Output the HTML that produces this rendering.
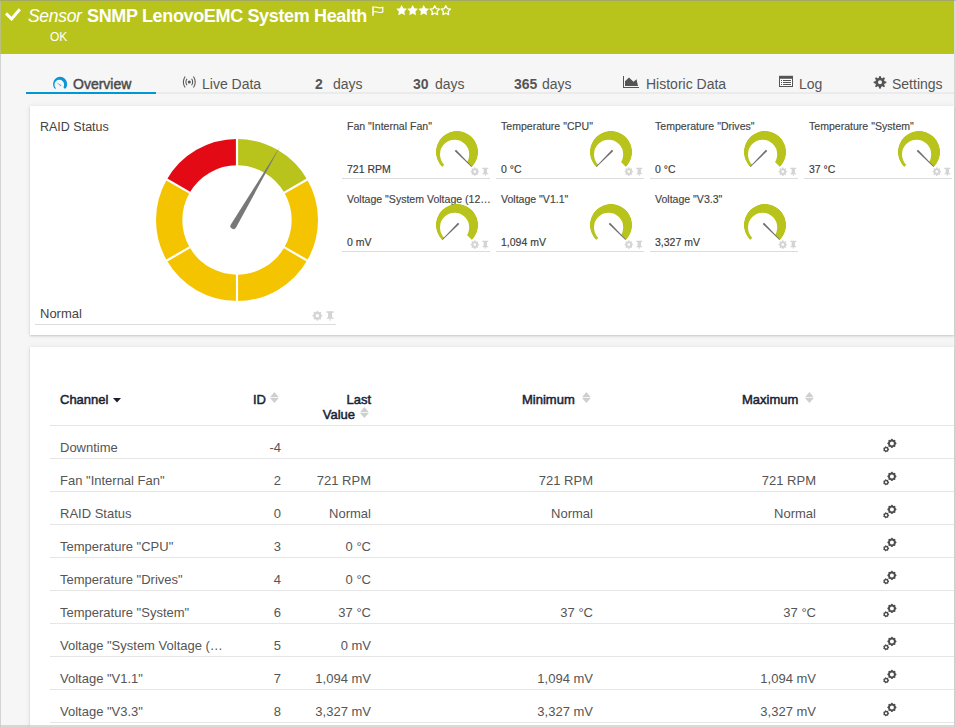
<!DOCTYPE html>
<html><head><meta charset="utf-8">
<style>
*{margin:0;padding:0;box-sizing:border-box}
html,body{width:956px;height:727px;overflow:hidden}
body{background:#f6f6f6;position:relative;font-family:"Liberation Sans",sans-serif;color:#444}
.abs{position:absolute}
#hdr{position:absolute;left:0;top:0;width:954px;height:54px;background:#b8c41c}
.tab{position:absolute;top:75px;font-size:14px;color:#555;white-space:nowrap;line-height:18px}
.panel{position:absolute;left:30px;width:924px;background:#fff;box-shadow:0 1px 2px rgba(0,0,0,0.16),0 0 6px rgba(0,0,0,0.07)}
.tt{position:absolute;font-size:10.55px;color:#444;-webkit-text-stroke:0.15px #444;white-space:nowrap;line-height:14px}
.tv{position:absolute;font-size:10.5px;color:#3a3a3a;-webkit-text-stroke:0.15px #3a3a3a;white-space:nowrap;line-height:14px}
.tl{position:absolute;width:148px;height:1px;background:#dcdcdc}
.rl{position:absolute;left:50px;width:904px;height:1px;background:#e6e6e6}
.td{position:absolute;font-size:13px;color:#555;white-space:nowrap;line-height:16px}
.th{position:absolute;font-size:13px;font-weight:normal;color:#1b1f33;-webkit-text-stroke:0.5px #1b1f33;white-space:nowrap;line-height:15px}
</style></head><body>
<div id="hdr"></div>
<div class="abs" style="left:0;top:0;width:956px;height:1px;background:rgba(150,150,150,0.6)"></div>
<svg class="abs" style="left:5px;top:8px" width="16" height="13"><path d="M1,5.4 L6.6,11 L14.8,1.2" stroke="#fff" stroke-width="3" fill="none"/></svg>
<div class="abs" style="left:28px;top:5px;font-size:17.5px;font-style:italic;color:#fff;line-height:22px;white-space:nowrap;letter-spacing:-0.3px">Sensor</div>
<div class="abs" style="left:87px;top:5px;font-size:18px;font-weight:bold;color:#fff;line-height:22px;white-space:nowrap;letter-spacing:-0.35px">SNMP LenovoEMC System Health</div>
<svg class="abs" style="left:372px;top:6px" width="12" height="10"><path d="M1,0.5 V9.8" stroke="#fff" stroke-width="1.5" fill="none"/><path d="M1.5,1.3 C4,0 6,3 10.8,1.3 V6 C6,7.7 4,4.7 1.5,6" stroke="#fff" stroke-width="1.2" fill="none"/></svg>
<svg class="abs" style="left:396px;top:4px" width="60" height="14"><path d="M5.60,1.00 L7.31,4.24 L10.93,4.87 L8.37,7.50 L8.89,11.13 L5.60,9.51 L2.31,11.13 L2.83,7.50 L0.27,4.87 L3.89,4.24 Z" fill="#fff"/><path d="M16.65,1.00 L18.36,4.24 L21.98,4.87 L19.42,7.50 L19.94,11.13 L16.65,9.51 L13.36,11.13 L13.88,7.50 L11.32,4.87 L14.94,4.24 Z" fill="#fff"/><path d="M27.70,1.00 L29.41,4.24 L33.03,4.87 L30.47,7.50 L30.99,11.13 L27.70,9.51 L24.41,11.13 L24.93,7.50 L22.37,4.87 L25.99,4.24 Z" fill="#fff"/><path d="M38.75,1.70 L40.25,4.54 L43.41,5.09 L41.17,7.39 L41.63,10.56 L38.75,9.15 L35.87,10.56 L36.33,7.39 L34.09,5.09 L37.25,4.54 Z" fill="none" stroke="#fff" stroke-width="1.3" stroke-linejoin="round"/><path d="M49.80,1.70 L51.30,4.54 L54.46,5.09 L52.22,7.39 L52.68,10.56 L49.80,9.15 L46.92,10.56 L47.38,7.39 L45.14,5.09 L48.30,4.54 Z" fill="none" stroke="#fff" stroke-width="1.3" stroke-linejoin="round"/></svg>
<div class="abs" style="left:50px;top:30px;font-size:12px;color:#fff;line-height:14px">OK</div>

<div class="abs" style="left:26px;top:92px;width:928px;height:2px;background:#ebebeb"></div>
<div class="abs" style="left:26px;top:92px;width:130px;height:2px;background:#0097d7"></div>
<svg class="abs" style="left:52px;top:76px" width="20" height="14"><defs><clipPath id="ovc"><path d="M8.10,7.90 L2.37,13.63 A8.1,8.1 0 1 1 13.83,13.63 Z"/></clipPath></defs><path clip-path="url(#ovc)" fill-rule="evenodd" fill="#0a97d6" d="M1.00,7.90 a7.1,7.1 0 1 0 14.20,0 a7.1,7.1 0 1 0 -14.20,0 Z M2.45,8.70 a4.85,4.85 0 1 0 9.70,0 a4.85,4.85 0 1 0 -9.70,0 Z"/><path d="M3.9,6.0 L9.4,9.6 L8.9,10.2 Z" fill="#0a97d6"/></svg>
<div class="tab" style="left:73px;color:#4a4a4a;-webkit-text-stroke:0.45px #4a4a4a">Overview</div>
<svg class="abs" style="left:181px;top:75px" width="17" height="14"><circle cx="8.3" cy="7" r="1.5" fill="#555"/><path d="M6.0,3.7 A6,6 0 0 0 6.0,10.3 M10.6,3.7 A6,6 0 0 1 10.6,10.3 M4.15,1.5 A10,10 0 0 0 4.15,12.5 M12.45,1.5 A10,10 0 0 1 12.45,12.5" stroke="#555" stroke-width="1.05" fill="none"/></svg>
<div class="tab" style="left:202px">Live Data</div>
<div class="tab" style="left:315px"><b>2</b></div><div class="tab" style="left:333px">days</div>
<div class="tab" style="left:413px"><b>30</b></div><div class="tab" style="left:435px">days</div>
<div class="tab" style="left:514px"><b>365</b></div><div class="tab" style="left:542px">days</div>
<svg class="abs" style="left:622px;top:75px" width="18" height="14"><rect x="1" y="1" width="1" height="12" fill="#555"/><rect x="1" y="12" width="16" height="1" fill="#555"/><path d="M3,11 V6.3 L7,2.6 L11.5,6.8 L14.5,4.2 L16,11 Z" fill="#555"/></svg>
<div class="tab" style="left:646px">Historic Data</div>
<svg class="abs" style="left:779px;top:75px" width="14" height="12"><rect x="0" y="0.8" width="14" height="11.2" fill="#555"/><rect x="1" y="3.8" width="12" height="7.2" fill="#fff"/><path d="M2,5 h1 v1 h-1 Z M2,7 h1 v1 h-1 Z M2,9 h1 v1 h-1 Z M4,5 h8 v1 h-8 Z M4,7 h8 v1 h-8 Z M4,9 h8 v1 h-8 Z" fill="#555"/></svg>
<div class="tab" style="left:799px">Log</div>
<svg class="abs" style="left:0;top:0" width="956" height="100"><path fill-rule="evenodd" fill="#555" d="M886.37,81.67 L886.37,82.93 L884.40,83.64 L884.06,84.47 L884.95,86.36 L884.06,87.25 L882.17,86.36 L881.34,86.70 L880.63,88.67 L879.37,88.67 L878.66,86.70 L877.83,86.36 L875.94,87.25 L875.05,86.36 L875.94,84.47 L875.60,83.64 L873.63,82.93 L873.63,81.67 L875.60,80.96 L875.94,80.13 L875.05,78.24 L875.94,77.35 L877.83,78.24 L878.66,77.90 L879.37,75.93 L880.63,75.93 L881.34,77.90 L882.17,78.24 L884.06,77.35 L884.95,78.24 L884.06,80.13 L884.40,80.96 Z M878.00,82.30 a2.0,2.0 0 1 0 4.00,0 a2.0,2.0 0 1 0 -4.00,0 Z"/></svg>
<div class="tab" style="left:892px">Settings</div>

<div class="panel" style="top:106px;height:229px"></div>
<div class="panel" style="top:347px;height:400px"></div>

<div class="abs" style="left:40px;top:119px;font-size:12.5px;color:#444;line-height:16px">RAID Status</div>
<div class="abs" style="left:40px;top:306px;font-size:13px;color:#444;line-height:16px">Normal</div>
<div class="abs" style="left:35px;top:324px;width:301px;height:1px;background:#dcdcdc"></div>
<svg width="956" height="727" style="position:absolute;left:0;top:0"><path d="M237.00,139.00 A81,81 0 0 1 307.15,179.50 L284.37,192.65 A54.7,54.7 0 0 0 237.00,165.30 Z" fill="#b8c41c"/><path d="M307.15,179.50 A81,81 0 0 1 307.15,260.50 L284.37,247.35 A54.7,54.7 0 0 0 284.37,192.65 Z" fill="#f5c400"/><path d="M307.15,260.50 A81,81 0 0 1 237.00,301.00 L237.00,274.70 A54.7,54.7 0 0 0 284.37,247.35 Z" fill="#f5c400"/><path d="M237.00,301.00 A81,81 0 0 1 166.85,260.50 L189.63,247.35 A54.7,54.7 0 0 0 237.00,274.70 Z" fill="#f5c400"/><path d="M166.85,260.50 A81,81 0 0 1 166.85,179.50 L189.63,192.65 A54.7,54.7 0 0 0 189.63,247.35 Z" fill="#f5c400"/><path d="M166.85,179.50 A81,81 0 0 1 237.00,139.00 L237.00,165.30 A54.7,54.7 0 0 0 189.63,192.65 Z" fill="#e30a16"/><line x1="237.00" y1="167.30" x2="237.00" y2="137.00" stroke="#fff" stroke-width="2.2"/><line x1="282.64" y1="193.65" x2="308.88" y2="178.50" stroke="#fff" stroke-width="2.2"/><line x1="282.64" y1="246.35" x2="308.88" y2="261.50" stroke="#fff" stroke-width="2.2"/><line x1="237.00" y1="272.70" x2="237.00" y2="303.00" stroke="#fff" stroke-width="2.2"/><line x1="191.36" y1="246.35" x2="165.12" y2="261.50" stroke="#fff" stroke-width="2.2"/><line x1="191.36" y1="193.65" x2="165.12" y2="178.50" stroke="#fff" stroke-width="2.2"/><path d="M236.05,227.56 L280.27,146.26 L230.87,224.52 A3.0,3.0 0 0 0 236.05,227.56 Z" fill="#787878"/></svg>
<div class="tt" style="left:347px;top:119px">Fan "Internal Fan"</div>
<div class="tv" style="left:347px;top:162px">721 RPM</div>
<div class="tl" style="left:342px;top:178px"></div><div class="tt" style="left:501px;top:119px">Temperature "CPU"</div>
<div class="tv" style="left:501px;top:162px">0 °C</div>
<div class="tl" style="left:496px;top:178px"></div><div class="tt" style="left:655px;top:119px">Temperature "Drives"</div>
<div class="tv" style="left:655px;top:162px">0 °C</div>
<div class="tl" style="left:650px;top:178px"></div><div class="tt" style="left:809px;top:119px">Temperature "System"</div>
<div class="tv" style="left:809px;top:162px">37 °C</div>
<div class="tl" style="left:804px;top:178px"></div><div class="tt" style="left:347px;top:192px">Voltage "System Voltage (12…</div>
<div class="tv" style="left:347px;top:235px">0 mV</div>
<div class="tl" style="left:342px;top:251px"></div><div class="tt" style="left:501px;top:192px">Voltage "V1.1"</div>
<div class="tv" style="left:501px;top:235px">1,094 mV</div>
<div class="tl" style="left:496px;top:251px"></div><div class="tt" style="left:655px;top:192px">Voltage "V3.3"</div>
<div class="tv" style="left:655px;top:235px">3,327 mV</div>
<div class="tl" style="left:650px;top:251px"></div>
<svg width="956" height="727" style="position:absolute;left:0;top:0"><clipPath id="c0"><path d="M457.00,152.00 L442.01,166.99 A21.2,21.2 0 1 1 471.99,166.99 Z"/></clipPath><path clip-path="url(#c0)" fill-rule="evenodd" fill="#b8c41c" d="M435.80,152.00 a21.2,21.2 0 1 0 42.40,0 a21.2,21.2 0 1 0 -42.40,0 Z M440.00,154.40 a14.6,14.6 0 1 0 29.20,0 a14.6,14.6 0 1 0 -29.20,0 Z"/><path d="M454.67,151.08 L471.46,166.96 L471.96,166.46 L456.08,149.67 Z" fill="#6e6e6e"/><clipPath id="c1"><path d="M611.00,152.00 L596.01,166.99 A21.2,21.2 0 1 1 625.99,166.99 Z"/></clipPath><path clip-path="url(#c1)" fill-rule="evenodd" fill="#b8c41c" d="M589.80,152.00 a21.2,21.2 0 1 0 42.40,0 a21.2,21.2 0 1 0 -42.40,0 Z M594.00,154.40 a14.6,14.6 0 1 0 29.20,0 a14.6,14.6 0 1 0 -29.20,0 Z"/><path d="M611.92,149.67 L596.04,166.46 L596.54,166.96 L613.33,151.08 Z" fill="#6e6e6e"/><clipPath id="c2"><path d="M765.00,152.00 L750.01,166.99 A21.2,21.2 0 1 1 779.99,166.99 Z"/></clipPath><path clip-path="url(#c2)" fill-rule="evenodd" fill="#b8c41c" d="M743.80,152.00 a21.2,21.2 0 1 0 42.40,0 a21.2,21.2 0 1 0 -42.40,0 Z M748.00,154.40 a14.6,14.6 0 1 0 29.20,0 a14.6,14.6 0 1 0 -29.20,0 Z"/><path d="M765.92,149.67 L750.04,166.46 L750.54,166.96 L767.33,151.08 Z" fill="#6e6e6e"/><clipPath id="c3"><path d="M919.00,152.00 L904.01,166.99 A21.2,21.2 0 1 1 933.99,166.99 Z"/></clipPath><path clip-path="url(#c3)" fill-rule="evenodd" fill="#b8c41c" d="M897.80,152.00 a21.2,21.2 0 1 0 42.40,0 a21.2,21.2 0 1 0 -42.40,0 Z M902.00,154.40 a14.6,14.6 0 1 0 29.20,0 a14.6,14.6 0 1 0 -29.20,0 Z"/><path d="M916.67,151.08 L933.46,166.96 L933.96,166.46 L918.08,149.67 Z" fill="#6e6e6e"/><clipPath id="c4"><path d="M457.00,225.00 L442.01,239.99 A21.2,21.2 0 1 1 471.99,239.99 Z"/></clipPath><path clip-path="url(#c4)" fill-rule="evenodd" fill="#b8c41c" d="M435.80,225.00 a21.2,21.2 0 1 0 42.40,0 a21.2,21.2 0 1 0 -42.40,0 Z M440.00,227.40 a14.6,14.6 0 1 0 29.20,0 a14.6,14.6 0 1 0 -29.20,0 Z"/><path d="M457.92,222.67 L442.04,239.46 L442.54,239.96 L459.33,224.08 Z" fill="#6e6e6e"/><clipPath id="c5"><path d="M611.00,225.00 L596.01,239.99 A21.2,21.2 0 1 1 625.99,239.99 Z"/></clipPath><path clip-path="url(#c5)" fill-rule="evenodd" fill="#b8c41c" d="M589.80,225.00 a21.2,21.2 0 1 0 42.40,0 a21.2,21.2 0 1 0 -42.40,0 Z M594.00,227.40 a14.6,14.6 0 1 0 29.20,0 a14.6,14.6 0 1 0 -29.20,0 Z"/><path d="M608.67,224.08 L625.46,239.96 L625.96,239.46 L610.08,222.67 Z" fill="#6e6e6e"/><clipPath id="c6"><path d="M765.00,225.00 L750.01,239.99 A21.2,21.2 0 1 1 779.99,239.99 Z"/></clipPath><path clip-path="url(#c6)" fill-rule="evenodd" fill="#b8c41c" d="M743.80,225.00 a21.2,21.2 0 1 0 42.40,0 a21.2,21.2 0 1 0 -42.40,0 Z M748.00,227.40 a14.6,14.6 0 1 0 29.20,0 a14.6,14.6 0 1 0 -29.20,0 Z"/><path d="M762.67,224.08 L779.46,239.96 L779.96,239.46 L764.08,222.67 Z" fill="#6e6e6e"/><path fill-rule="evenodd" fill="#d4d4d4" d="M479.08,171.18 L479.08,172.02 L477.96,172.56 L477.71,173.16 L478.12,174.33 L477.53,174.92 L476.36,174.51 L475.76,174.76 L475.22,175.88 L474.38,175.88 L473.84,174.76 L473.24,174.51 L472.07,174.92 L471.48,174.33 L471.89,173.16 L471.64,172.56 L470.52,172.02 L470.52,171.18 L471.64,170.64 L471.89,170.04 L471.48,168.87 L472.07,168.28 L473.24,168.69 L473.84,168.44 L474.38,167.32 L475.22,167.32 L475.76,168.44 L476.36,168.69 L477.53,168.28 L478.12,168.87 L477.71,170.04 L477.96,170.64 Z M473.40,171.60 a1.4,1.4 0 1 0 2.80,0 a1.4,1.4 0 1 0 -2.80,0 Z"/><path fill="#d4d4d4" d="M482.30,167.80 h6.00 v1.28 h-1.35 v3.60 l1.35,0.96 v0.58 h-2.50 v1.58 h-1 v-1.58 h-2.50 v-0.58 l1.35,-0.96 v-3.60 h-1.35 Z"/><path fill-rule="evenodd" fill="#d4d4d4" d="M633.08,171.18 L633.08,172.02 L631.96,172.56 L631.71,173.16 L632.12,174.33 L631.53,174.92 L630.36,174.51 L629.76,174.76 L629.22,175.88 L628.38,175.88 L627.84,174.76 L627.24,174.51 L626.07,174.92 L625.48,174.33 L625.89,173.16 L625.64,172.56 L624.52,172.02 L624.52,171.18 L625.64,170.64 L625.89,170.04 L625.48,168.87 L626.07,168.28 L627.24,168.69 L627.84,168.44 L628.38,167.32 L629.22,167.32 L629.76,168.44 L630.36,168.69 L631.53,168.28 L632.12,168.87 L631.71,170.04 L631.96,170.64 Z M627.40,171.60 a1.4,1.4 0 1 0 2.80,0 a1.4,1.4 0 1 0 -2.80,0 Z"/><path fill="#d4d4d4" d="M636.30,167.80 h6.00 v1.28 h-1.35 v3.60 l1.35,0.96 v0.58 h-2.50 v1.58 h-1 v-1.58 h-2.50 v-0.58 l1.35,-0.96 v-3.60 h-1.35 Z"/><path fill-rule="evenodd" fill="#d4d4d4" d="M787.08,171.18 L787.08,172.02 L785.96,172.56 L785.71,173.16 L786.12,174.33 L785.53,174.92 L784.36,174.51 L783.76,174.76 L783.22,175.88 L782.38,175.88 L781.84,174.76 L781.24,174.51 L780.07,174.92 L779.48,174.33 L779.89,173.16 L779.64,172.56 L778.52,172.02 L778.52,171.18 L779.64,170.64 L779.89,170.04 L779.48,168.87 L780.07,168.28 L781.24,168.69 L781.84,168.44 L782.38,167.32 L783.22,167.32 L783.76,168.44 L784.36,168.69 L785.53,168.28 L786.12,168.87 L785.71,170.04 L785.96,170.64 Z M781.40,171.60 a1.4,1.4 0 1 0 2.80,0 a1.4,1.4 0 1 0 -2.80,0 Z"/><path fill="#d4d4d4" d="M790.30,167.80 h6.00 v1.28 h-1.35 v3.60 l1.35,0.96 v0.58 h-2.50 v1.58 h-1 v-1.58 h-2.50 v-0.58 l1.35,-0.96 v-3.60 h-1.35 Z"/><path fill-rule="evenodd" fill="#d4d4d4" d="M941.08,171.18 L941.08,172.02 L939.96,172.56 L939.71,173.16 L940.12,174.33 L939.53,174.92 L938.36,174.51 L937.76,174.76 L937.22,175.88 L936.38,175.88 L935.84,174.76 L935.24,174.51 L934.07,174.92 L933.48,174.33 L933.89,173.16 L933.64,172.56 L932.52,172.02 L932.52,171.18 L933.64,170.64 L933.89,170.04 L933.48,168.87 L934.07,168.28 L935.24,168.69 L935.84,168.44 L936.38,167.32 L937.22,167.32 L937.76,168.44 L938.36,168.69 L939.53,168.28 L940.12,168.87 L939.71,170.04 L939.96,170.64 Z M935.40,171.60 a1.4,1.4 0 1 0 2.80,0 a1.4,1.4 0 1 0 -2.80,0 Z"/><path fill="#d4d4d4" d="M944.30,167.80 h6.00 v1.28 h-1.35 v3.60 l1.35,0.96 v0.58 h-2.50 v1.58 h-1 v-1.58 h-2.50 v-0.58 l1.35,-0.96 v-3.60 h-1.35 Z"/><path fill-rule="evenodd" fill="#d4d4d4" d="M479.08,244.18 L479.08,245.02 L477.96,245.56 L477.71,246.16 L478.12,247.33 L477.53,247.92 L476.36,247.51 L475.76,247.76 L475.22,248.88 L474.38,248.88 L473.84,247.76 L473.24,247.51 L472.07,247.92 L471.48,247.33 L471.89,246.16 L471.64,245.56 L470.52,245.02 L470.52,244.18 L471.64,243.64 L471.89,243.04 L471.48,241.87 L472.07,241.28 L473.24,241.69 L473.84,241.44 L474.38,240.32 L475.22,240.32 L475.76,241.44 L476.36,241.69 L477.53,241.28 L478.12,241.87 L477.71,243.04 L477.96,243.64 Z M473.40,244.60 a1.4,1.4 0 1 0 2.80,0 a1.4,1.4 0 1 0 -2.80,0 Z"/><path fill="#d4d4d4" d="M482.30,240.80 h6.00 v1.28 h-1.35 v3.60 l1.35,0.96 v0.58 h-2.50 v1.58 h-1 v-1.58 h-2.50 v-0.58 l1.35,-0.96 v-3.60 h-1.35 Z"/><path fill-rule="evenodd" fill="#d4d4d4" d="M633.08,244.18 L633.08,245.02 L631.96,245.56 L631.71,246.16 L632.12,247.33 L631.53,247.92 L630.36,247.51 L629.76,247.76 L629.22,248.88 L628.38,248.88 L627.84,247.76 L627.24,247.51 L626.07,247.92 L625.48,247.33 L625.89,246.16 L625.64,245.56 L624.52,245.02 L624.52,244.18 L625.64,243.64 L625.89,243.04 L625.48,241.87 L626.07,241.28 L627.24,241.69 L627.84,241.44 L628.38,240.32 L629.22,240.32 L629.76,241.44 L630.36,241.69 L631.53,241.28 L632.12,241.87 L631.71,243.04 L631.96,243.64 Z M627.40,244.60 a1.4,1.4 0 1 0 2.80,0 a1.4,1.4 0 1 0 -2.80,0 Z"/><path fill="#d4d4d4" d="M636.30,240.80 h6.00 v1.28 h-1.35 v3.60 l1.35,0.96 v0.58 h-2.50 v1.58 h-1 v-1.58 h-2.50 v-0.58 l1.35,-0.96 v-3.60 h-1.35 Z"/><path fill-rule="evenodd" fill="#d4d4d4" d="M787.08,244.18 L787.08,245.02 L785.96,245.56 L785.71,246.16 L786.12,247.33 L785.53,247.92 L784.36,247.51 L783.76,247.76 L783.22,248.88 L782.38,248.88 L781.84,247.76 L781.24,247.51 L780.07,247.92 L779.48,247.33 L779.89,246.16 L779.64,245.56 L778.52,245.02 L778.52,244.18 L779.64,243.64 L779.89,243.04 L779.48,241.87 L780.07,241.28 L781.24,241.69 L781.84,241.44 L782.38,240.32 L783.22,240.32 L783.76,241.44 L784.36,241.69 L785.53,241.28 L786.12,241.87 L785.71,243.04 L785.96,243.64 Z M781.40,244.60 a1.4,1.4 0 1 0 2.80,0 a1.4,1.4 0 1 0 -2.80,0 Z"/><path fill="#d4d4d4" d="M790.30,240.80 h6.00 v1.28 h-1.35 v3.60 l1.35,0.96 v0.58 h-2.50 v1.58 h-1 v-1.58 h-2.50 v-0.58 l1.35,-0.96 v-3.60 h-1.35 Z"/><path fill-rule="evenodd" fill="#d4d4d4" d="M322.38,315.21 L322.38,316.19 L321.13,316.83 L320.84,317.54 L321.27,318.87 L320.57,319.57 L319.24,319.14 L318.53,319.43 L317.89,320.68 L316.91,320.68 L316.27,319.43 L315.56,319.14 L314.23,319.57 L313.53,318.87 L313.96,317.54 L313.67,316.83 L312.42,316.19 L312.42,315.21 L313.67,314.57 L313.96,313.86 L313.53,312.53 L314.23,311.83 L315.56,312.26 L316.27,311.97 L316.91,310.72 L317.89,310.72 L318.53,311.97 L319.24,312.26 L320.57,311.83 L321.27,312.53 L320.84,313.86 L321.13,314.57 Z M315.70,315.70 a1.7,1.7 0 1 0 3.40,0 a1.7,1.7 0 1 0 -3.40,0 Z"/><path fill="#d4d4d4" d="M326.50,311.20 h7.20 v1.52 h-1.62 v4.28 l1.62,1.14 v0.68 h-3.10 v1.88 h-1 v-1.88 h-3.10 v-0.68 l1.62,-1.14 v-4.28 h-1.62 Z"/><path fill-rule="evenodd" fill="#4d4d4d" d="M896.48,442.95 L896.48,443.85 L895.63,444.53 L895.34,445.24 L895.46,446.32 L894.82,446.96 L893.74,446.84 L893.03,447.13 L892.35,447.98 L891.45,447.98 L890.77,447.13 L890.06,446.84 L888.98,446.96 L888.34,446.32 L888.46,445.24 L888.17,444.53 L887.32,443.85 L887.32,442.95 L888.17,442.27 L888.46,441.56 L888.34,440.48 L888.98,439.84 L890.06,439.96 L890.77,439.67 L891.45,438.82 L892.35,438.82 L893.03,439.67 L893.74,439.96 L894.82,439.84 L895.46,440.48 L895.34,441.56 L895.63,442.27 Z M889.90,443.40 a2.0,2.0 0 1 0 4.00,0 a2.0,2.0 0 1 0 -4.00,0 Z"/><path fill-rule="evenodd" fill="#4d4d4d" d="M889.08,448.96 L889.08,449.64 L888.46,450.13 L888.22,450.63 L888.22,451.42 L887.70,451.84 L886.93,451.66 L886.38,451.78 L885.76,452.28 L885.11,452.13 L884.77,451.42 L884.33,451.07 L883.56,450.90 L883.27,450.29 L883.62,449.58 L883.62,449.02 L883.27,448.31 L883.56,447.70 L884.33,447.53 L884.77,447.18 L885.11,446.47 L885.76,446.32 L886.38,446.82 L886.93,446.94 L887.70,446.76 L888.22,447.18 L888.22,447.97 L888.46,448.47 Z M884.95,449.30 a1.15,1.15 0 1 0 2.30,0 a1.15,1.15 0 1 0 -2.30,0 Z"/><path fill-rule="evenodd" fill="#4d4d4d" d="M896.48,475.95 L896.48,476.85 L895.63,477.53 L895.34,478.24 L895.46,479.32 L894.82,479.96 L893.74,479.84 L893.03,480.13 L892.35,480.98 L891.45,480.98 L890.77,480.13 L890.06,479.84 L888.98,479.96 L888.34,479.32 L888.46,478.24 L888.17,477.53 L887.32,476.85 L887.32,475.95 L888.17,475.27 L888.46,474.56 L888.34,473.48 L888.98,472.84 L890.06,472.96 L890.77,472.67 L891.45,471.82 L892.35,471.82 L893.03,472.67 L893.74,472.96 L894.82,472.84 L895.46,473.48 L895.34,474.56 L895.63,475.27 Z M889.90,476.40 a2.0,2.0 0 1 0 4.00,0 a2.0,2.0 0 1 0 -4.00,0 Z"/><path fill-rule="evenodd" fill="#4d4d4d" d="M889.08,481.96 L889.08,482.64 L888.46,483.13 L888.22,483.63 L888.22,484.42 L887.70,484.84 L886.93,484.66 L886.38,484.78 L885.76,485.28 L885.11,485.13 L884.77,484.42 L884.33,484.07 L883.56,483.90 L883.27,483.29 L883.62,482.58 L883.62,482.02 L883.27,481.31 L883.56,480.70 L884.33,480.53 L884.77,480.18 L885.11,479.47 L885.76,479.32 L886.38,479.82 L886.93,479.94 L887.70,479.76 L888.22,480.18 L888.22,480.97 L888.46,481.47 Z M884.95,482.30 a1.15,1.15 0 1 0 2.30,0 a1.15,1.15 0 1 0 -2.30,0 Z"/><path fill-rule="evenodd" fill="#4d4d4d" d="M896.48,508.95 L896.48,509.85 L895.63,510.53 L895.34,511.24 L895.46,512.32 L894.82,512.96 L893.74,512.84 L893.03,513.13 L892.35,513.98 L891.45,513.98 L890.77,513.13 L890.06,512.84 L888.98,512.96 L888.34,512.32 L888.46,511.24 L888.17,510.53 L887.32,509.85 L887.32,508.95 L888.17,508.27 L888.46,507.56 L888.34,506.48 L888.98,505.84 L890.06,505.96 L890.77,505.67 L891.45,504.82 L892.35,504.82 L893.03,505.67 L893.74,505.96 L894.82,505.84 L895.46,506.48 L895.34,507.56 L895.63,508.27 Z M889.90,509.40 a2.0,2.0 0 1 0 4.00,0 a2.0,2.0 0 1 0 -4.00,0 Z"/><path fill-rule="evenodd" fill="#4d4d4d" d="M889.08,514.96 L889.08,515.64 L888.46,516.13 L888.22,516.63 L888.22,517.42 L887.70,517.84 L886.93,517.66 L886.38,517.78 L885.76,518.28 L885.11,518.13 L884.77,517.42 L884.33,517.07 L883.56,516.90 L883.27,516.29 L883.62,515.58 L883.62,515.02 L883.27,514.31 L883.56,513.70 L884.33,513.53 L884.77,513.18 L885.11,512.47 L885.76,512.32 L886.38,512.82 L886.93,512.94 L887.70,512.76 L888.22,513.18 L888.22,513.97 L888.46,514.47 Z M884.95,515.30 a1.15,1.15 0 1 0 2.30,0 a1.15,1.15 0 1 0 -2.30,0 Z"/><path fill-rule="evenodd" fill="#4d4d4d" d="M896.48,541.95 L896.48,542.85 L895.63,543.53 L895.34,544.24 L895.46,545.32 L894.82,545.96 L893.74,545.84 L893.03,546.13 L892.35,546.98 L891.45,546.98 L890.77,546.13 L890.06,545.84 L888.98,545.96 L888.34,545.32 L888.46,544.24 L888.17,543.53 L887.32,542.85 L887.32,541.95 L888.17,541.27 L888.46,540.56 L888.34,539.48 L888.98,538.84 L890.06,538.96 L890.77,538.67 L891.45,537.82 L892.35,537.82 L893.03,538.67 L893.74,538.96 L894.82,538.84 L895.46,539.48 L895.34,540.56 L895.63,541.27 Z M889.90,542.40 a2.0,2.0 0 1 0 4.00,0 a2.0,2.0 0 1 0 -4.00,0 Z"/><path fill-rule="evenodd" fill="#4d4d4d" d="M889.08,547.96 L889.08,548.64 L888.46,549.13 L888.22,549.63 L888.22,550.42 L887.70,550.84 L886.93,550.66 L886.38,550.78 L885.76,551.28 L885.11,551.13 L884.77,550.42 L884.33,550.07 L883.56,549.90 L883.27,549.29 L883.62,548.58 L883.62,548.02 L883.27,547.31 L883.56,546.70 L884.33,546.53 L884.77,546.18 L885.11,545.47 L885.76,545.32 L886.38,545.82 L886.93,545.94 L887.70,545.76 L888.22,546.18 L888.22,546.97 L888.46,547.47 Z M884.95,548.30 a1.15,1.15 0 1 0 2.30,0 a1.15,1.15 0 1 0 -2.30,0 Z"/><path fill-rule="evenodd" fill="#4d4d4d" d="M896.48,574.95 L896.48,575.85 L895.63,576.53 L895.34,577.24 L895.46,578.32 L894.82,578.96 L893.74,578.84 L893.03,579.13 L892.35,579.98 L891.45,579.98 L890.77,579.13 L890.06,578.84 L888.98,578.96 L888.34,578.32 L888.46,577.24 L888.17,576.53 L887.32,575.85 L887.32,574.95 L888.17,574.27 L888.46,573.56 L888.34,572.48 L888.98,571.84 L890.06,571.96 L890.77,571.67 L891.45,570.82 L892.35,570.82 L893.03,571.67 L893.74,571.96 L894.82,571.84 L895.46,572.48 L895.34,573.56 L895.63,574.27 Z M889.90,575.40 a2.0,2.0 0 1 0 4.00,0 a2.0,2.0 0 1 0 -4.00,0 Z"/><path fill-rule="evenodd" fill="#4d4d4d" d="M889.08,580.96 L889.08,581.64 L888.46,582.13 L888.22,582.63 L888.22,583.42 L887.70,583.84 L886.93,583.66 L886.38,583.78 L885.76,584.28 L885.11,584.13 L884.77,583.42 L884.33,583.07 L883.56,582.90 L883.27,582.29 L883.62,581.58 L883.62,581.02 L883.27,580.31 L883.56,579.70 L884.33,579.53 L884.77,579.18 L885.11,578.47 L885.76,578.32 L886.38,578.82 L886.93,578.94 L887.70,578.76 L888.22,579.18 L888.22,579.97 L888.46,580.47 Z M884.95,581.30 a1.15,1.15 0 1 0 2.30,0 a1.15,1.15 0 1 0 -2.30,0 Z"/><path fill-rule="evenodd" fill="#4d4d4d" d="M896.48,607.95 L896.48,608.85 L895.63,609.53 L895.34,610.24 L895.46,611.32 L894.82,611.96 L893.74,611.84 L893.03,612.13 L892.35,612.98 L891.45,612.98 L890.77,612.13 L890.06,611.84 L888.98,611.96 L888.34,611.32 L888.46,610.24 L888.17,609.53 L887.32,608.85 L887.32,607.95 L888.17,607.27 L888.46,606.56 L888.34,605.48 L888.98,604.84 L890.06,604.96 L890.77,604.67 L891.45,603.82 L892.35,603.82 L893.03,604.67 L893.74,604.96 L894.82,604.84 L895.46,605.48 L895.34,606.56 L895.63,607.27 Z M889.90,608.40 a2.0,2.0 0 1 0 4.00,0 a2.0,2.0 0 1 0 -4.00,0 Z"/><path fill-rule="evenodd" fill="#4d4d4d" d="M889.08,613.96 L889.08,614.64 L888.46,615.13 L888.22,615.63 L888.22,616.42 L887.70,616.84 L886.93,616.66 L886.38,616.78 L885.76,617.28 L885.11,617.13 L884.77,616.42 L884.33,616.07 L883.56,615.90 L883.27,615.29 L883.62,614.58 L883.62,614.02 L883.27,613.31 L883.56,612.70 L884.33,612.53 L884.77,612.18 L885.11,611.47 L885.76,611.32 L886.38,611.82 L886.93,611.94 L887.70,611.76 L888.22,612.18 L888.22,612.97 L888.46,613.47 Z M884.95,614.30 a1.15,1.15 0 1 0 2.30,0 a1.15,1.15 0 1 0 -2.30,0 Z"/><path fill-rule="evenodd" fill="#4d4d4d" d="M896.48,640.95 L896.48,641.85 L895.63,642.53 L895.34,643.24 L895.46,644.32 L894.82,644.96 L893.74,644.84 L893.03,645.13 L892.35,645.98 L891.45,645.98 L890.77,645.13 L890.06,644.84 L888.98,644.96 L888.34,644.32 L888.46,643.24 L888.17,642.53 L887.32,641.85 L887.32,640.95 L888.17,640.27 L888.46,639.56 L888.34,638.48 L888.98,637.84 L890.06,637.96 L890.77,637.67 L891.45,636.82 L892.35,636.82 L893.03,637.67 L893.74,637.96 L894.82,637.84 L895.46,638.48 L895.34,639.56 L895.63,640.27 Z M889.90,641.40 a2.0,2.0 0 1 0 4.00,0 a2.0,2.0 0 1 0 -4.00,0 Z"/><path fill-rule="evenodd" fill="#4d4d4d" d="M889.08,646.96 L889.08,647.64 L888.46,648.13 L888.22,648.63 L888.22,649.42 L887.70,649.84 L886.93,649.66 L886.38,649.78 L885.76,650.28 L885.11,650.13 L884.77,649.42 L884.33,649.07 L883.56,648.90 L883.27,648.29 L883.62,647.58 L883.62,647.02 L883.27,646.31 L883.56,645.70 L884.33,645.53 L884.77,645.18 L885.11,644.47 L885.76,644.32 L886.38,644.82 L886.93,644.94 L887.70,644.76 L888.22,645.18 L888.22,645.97 L888.46,646.47 Z M884.95,647.30 a1.15,1.15 0 1 0 2.30,0 a1.15,1.15 0 1 0 -2.30,0 Z"/><path fill-rule="evenodd" fill="#4d4d4d" d="M896.48,673.95 L896.48,674.85 L895.63,675.53 L895.34,676.24 L895.46,677.32 L894.82,677.96 L893.74,677.84 L893.03,678.13 L892.35,678.98 L891.45,678.98 L890.77,678.13 L890.06,677.84 L888.98,677.96 L888.34,677.32 L888.46,676.24 L888.17,675.53 L887.32,674.85 L887.32,673.95 L888.17,673.27 L888.46,672.56 L888.34,671.48 L888.98,670.84 L890.06,670.96 L890.77,670.67 L891.45,669.82 L892.35,669.82 L893.03,670.67 L893.74,670.96 L894.82,670.84 L895.46,671.48 L895.34,672.56 L895.63,673.27 Z M889.90,674.40 a2.0,2.0 0 1 0 4.00,0 a2.0,2.0 0 1 0 -4.00,0 Z"/><path fill-rule="evenodd" fill="#4d4d4d" d="M889.08,679.96 L889.08,680.64 L888.46,681.13 L888.22,681.63 L888.22,682.42 L887.70,682.84 L886.93,682.66 L886.38,682.78 L885.76,683.28 L885.11,683.13 L884.77,682.42 L884.33,682.07 L883.56,681.90 L883.27,681.29 L883.62,680.58 L883.62,680.02 L883.27,679.31 L883.56,678.70 L884.33,678.53 L884.77,678.18 L885.11,677.47 L885.76,677.32 L886.38,677.82 L886.93,677.94 L887.70,677.76 L888.22,678.18 L888.22,678.97 L888.46,679.47 Z M884.95,680.30 a1.15,1.15 0 1 0 2.30,0 a1.15,1.15 0 1 0 -2.30,0 Z"/><path fill-rule="evenodd" fill="#4d4d4d" d="M896.48,706.95 L896.48,707.85 L895.63,708.53 L895.34,709.24 L895.46,710.32 L894.82,710.96 L893.74,710.84 L893.03,711.13 L892.35,711.98 L891.45,711.98 L890.77,711.13 L890.06,710.84 L888.98,710.96 L888.34,710.32 L888.46,709.24 L888.17,708.53 L887.32,707.85 L887.32,706.95 L888.17,706.27 L888.46,705.56 L888.34,704.48 L888.98,703.84 L890.06,703.96 L890.77,703.67 L891.45,702.82 L892.35,702.82 L893.03,703.67 L893.74,703.96 L894.82,703.84 L895.46,704.48 L895.34,705.56 L895.63,706.27 Z M889.90,707.40 a2.0,2.0 0 1 0 4.00,0 a2.0,2.0 0 1 0 -4.00,0 Z"/><path fill-rule="evenodd" fill="#4d4d4d" d="M889.08,712.96 L889.08,713.64 L888.46,714.13 L888.22,714.63 L888.22,715.42 L887.70,715.84 L886.93,715.66 L886.38,715.78 L885.76,716.28 L885.11,716.13 L884.77,715.42 L884.33,715.07 L883.56,714.90 L883.27,714.29 L883.62,713.58 L883.62,713.02 L883.27,712.31 L883.56,711.70 L884.33,711.53 L884.77,711.18 L885.11,710.47 L885.76,710.32 L886.38,710.82 L886.93,710.94 L887.70,710.76 L888.22,711.18 L888.22,711.97 L888.46,712.47 Z M884.95,713.30 a1.15,1.15 0 1 0 2.30,0 a1.15,1.15 0 1 0 -2.30,0 Z"/></svg>

<div class="th" style="left:60px;top:392px">Channel</div>
<svg class="abs" style="left:113px;top:398px" width="9" height="5"><path d="M0,0 H8 L4,4.5 Z" fill="#1b1f33"/></svg>
<div class="th" style="left:253px;top:392px">ID</div><svg width="9" height="12" style="position:absolute;left:270.4px;top:392px"><path d="M4.4,0 L8.8,5.2 L0,5.2 Z M0,6 L8.8,6 L4.4,11 Z" fill="#cfcfcf"/></svg>
<div class="th" style="right:585px;top:392px;text-align:right">Last</div>
<div class="th" style="right:601px;top:407px;text-align:right">Value</div><svg width="9" height="12" style="position:absolute;left:360.4px;top:407px"><path d="M4.4,0 L8.8,5.2 L0,5.2 Z M0,6 L8.8,6 L4.4,11 Z" fill="#cfcfcf"/></svg>
<div class="th" style="left:522px;top:392px">Minimum</div><svg width="9" height="12" style="position:absolute;left:582.4px;top:392px"><path d="M4.4,0 L8.8,5.2 L0,5.2 Z M0,6 L8.8,6 L4.4,11 Z" fill="#cfcfcf"/></svg>
<div class="th" style="left:742px;top:392px">Maximum</div><svg width="9" height="12" style="position:absolute;left:805.4px;top:392px"><path d="M4.4,0 L8.8,5.2 L0,5.2 Z M0,6 L8.8,6 L4.4,11 Z" fill="#cfcfcf"/></svg>
<div class="rl" style="top:425px"></div>
<div class="td" style="left:60px;top:440px">Downtime</div>
<div class="td r" style="right:675px;top:440px">-4</div>
<div class="td r" style="right:585px;top:440px"></div>
<div class="td r" style="right:363px;top:440px"></div>
<div class="td r" style="right:140px;top:440px"></div><div class="rl" style="top:458px"></div>
<div class="td" style="left:60px;top:473px">Fan "Internal Fan"</div>
<div class="td r" style="right:675px;top:473px">2</div>
<div class="td r" style="right:585px;top:473px">721 RPM</div>
<div class="td r" style="right:363px;top:473px">721 RPM</div>
<div class="td r" style="right:140px;top:473px">721 RPM</div><div class="rl" style="top:491px"></div>
<div class="td" style="left:60px;top:506px">RAID Status</div>
<div class="td r" style="right:675px;top:506px">0</div>
<div class="td r" style="right:585px;top:506px">Normal</div>
<div class="td r" style="right:363px;top:506px">Normal</div>
<div class="td r" style="right:140px;top:506px">Normal</div><div class="rl" style="top:524px"></div>
<div class="td" style="left:60px;top:539px">Temperature "CPU"</div>
<div class="td r" style="right:675px;top:539px">3</div>
<div class="td r" style="right:585px;top:539px">0 °C</div>
<div class="td r" style="right:363px;top:539px"></div>
<div class="td r" style="right:140px;top:539px"></div><div class="rl" style="top:557px"></div>
<div class="td" style="left:60px;top:572px">Temperature "Drives"</div>
<div class="td r" style="right:675px;top:572px">4</div>
<div class="td r" style="right:585px;top:572px">0 °C</div>
<div class="td r" style="right:363px;top:572px"></div>
<div class="td r" style="right:140px;top:572px"></div><div class="rl" style="top:590px"></div>
<div class="td" style="left:60px;top:605px">Temperature "System"</div>
<div class="td r" style="right:675px;top:605px">6</div>
<div class="td r" style="right:585px;top:605px">37 °C</div>
<div class="td r" style="right:363px;top:605px">37 °C</div>
<div class="td r" style="right:140px;top:605px">37 °C</div><div class="rl" style="top:623px"></div>
<div class="td" style="left:60px;top:638px">Voltage "System Voltage (…</div>
<div class="td r" style="right:675px;top:638px">5</div>
<div class="td r" style="right:585px;top:638px">0 mV</div>
<div class="td r" style="right:363px;top:638px"></div>
<div class="td r" style="right:140px;top:638px"></div><div class="rl" style="top:656px"></div>
<div class="td" style="left:60px;top:671px">Voltage "V1.1"</div>
<div class="td r" style="right:675px;top:671px">7</div>
<div class="td r" style="right:585px;top:671px">1,094 mV</div>
<div class="td r" style="right:363px;top:671px">1,094 mV</div>
<div class="td r" style="right:140px;top:671px">1,094 mV</div><div class="rl" style="top:689px"></div>
<div class="td" style="left:60px;top:704px">Voltage "V3.3"</div>
<div class="td r" style="right:675px;top:704px">8</div>
<div class="td r" style="right:585px;top:704px">3,327 mV</div>
<div class="td r" style="right:363px;top:704px">3,327 mV</div>
<div class="td r" style="right:140px;top:704px">3,327 mV</div><div class="rl" style="top:722px"></div>

<div class="abs" style="left:0;top:1px;width:1px;height:726px;background:rgba(190,190,190,0.6)"></div>
<div class="abs" style="left:954px;top:1px;width:2px;height:724px;background:rgba(195,195,195,0.6)"></div>
<div class="abs" style="left:0;top:725px;width:956px;height:2px;background:rgba(195,195,195,0.6)"></div>
</body></html>
